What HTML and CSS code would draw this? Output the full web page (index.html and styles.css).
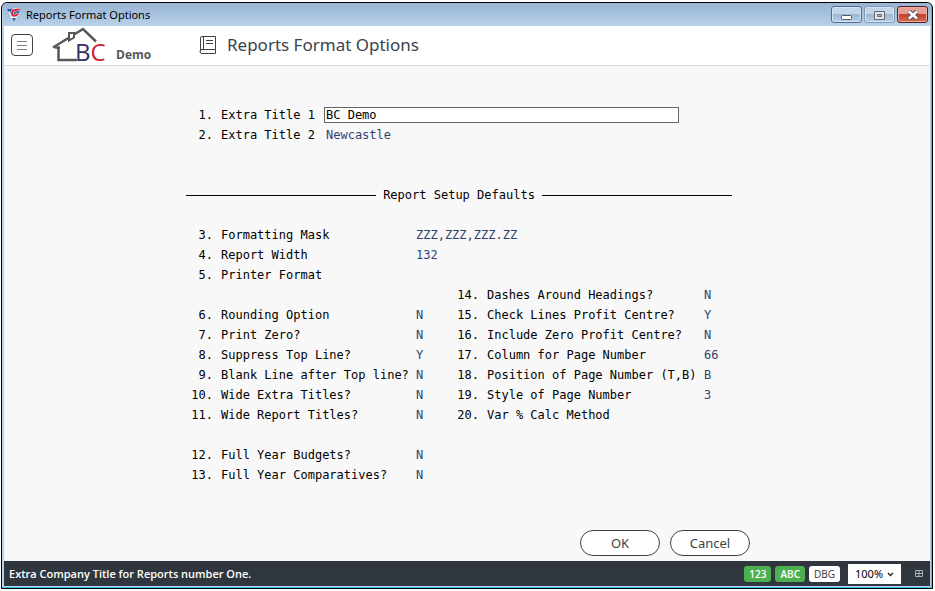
FILE: index.html
```html
<!DOCTYPE html>
<html lang="en">
<head>
    <meta charset="UTF-8">
    <meta name="viewport" content="width=device-width, initial-scale=1.0">
    <title>Reports Format Options</title>
    <link rel="stylesheet" href="styles.css">
</head>
<body>
    <div class="window">
        <!-- Title bar -->
        <div class="title-bar">
            <svg class="app-icon" width="14" height="14" viewBox="0 0 14 14">
                <path d="M0 1h13.500L7 13.500z" fill="#2f5cae"></path>
                <path d="M2 3.500l3 6M4 9.500h6" stroke="#fff" stroke-width="1.200"></path>
                <path d="M12.500 1.500C9.500 1 5 2.500 5 5.500s3.500 2.500 6 .5" fill="none" stroke="#fff" stroke-width="3"></path>
                <path d="M12.500 1.500C9.500 1 5 2.500 5 5.500s3.500 2.500 6 .5" fill="none" stroke="#d8202c" stroke-width="2"></path>
            </svg>
            <span class="title-text">Reports Format Options</span>
            <div class="window-buttons">
                <button class="window-button" aria-label="Minimize">
                    <svg width="12" height="12" viewBox="0 0 12 12"><rect x=".5" y="6.500" width="10" height="4" rx="1" fill="#fff" stroke="#535666"></rect></svg>
                </button>
                <button class="window-button maximize" aria-label="Maximize">
                    <svg width="12" height="12" viewBox="0 0 12 12"><path d="M.5 2.500h10v8h-10zM3.500 5.500v2h4v-2z" fill="#e4e4e4" fill-rule="evenodd" stroke="#626a78"></path></svg>
                </button>
                <button class="window-button close" aria-label="Close">
                    <svg width="14" height="12" viewBox="0 0 14 12"><path d="M3 2.500l8 7M11 2.500l-8 7" stroke="#535666" stroke-width="4.500"></path><path d="M3 2.500l8 7M11 2.500l-8 7" stroke="#fff" stroke-width="2.500"></path></svg>
                </button>
            </div>
        </div>

        <!-- Header -->
        <header class="header">
            <button class="menu-button" aria-label="Menu">
                <svg width="12" height="10" viewBox="0 0 12 10"><path d="M1 1.500h10M1 5.500h10M1 9.500h10" stroke="#7b8287"></path></svg>
            </button>
            <div class="brand">
                <svg class="logo" width="54" height="36" viewBox="0 0 54 36">
                    <path d="M1 20.500L31 2l13 12.500" fill="none" stroke="#58585a" stroke-width="2.500"></path>
                    <path d="M3 20.500h5M6.500 21v12H25" fill="none" stroke="#58585a" stroke-width="2.500"></path>
                    <path d="M17 11V6h5v4.500l-5 3z" fill="#fff" stroke="#58585a" stroke-width="2"></path>
                    <text class="logo-text" x="23" y="34" fill="#2f2f66">B<tspan fill="#cc2238">C</tspan></text>
                </svg>
                <span class="brand-name">Demo</span>
            </div>
            <svg class="book-icon" width="18" height="20" viewBox="0 0 18 20" fill="none" stroke="#39434c">
                <path d="M3 1.500h13.500v13H3a2 2 0 0 0 0 4h13.500v-4M1.500 16.500V3A1.500 1.500 0 0 1 3 1.500M4.500 1.500v13M7 5.500h7M7 8.500h7"></path>
            </svg>
            <h1 class="page-title">Reports Format Options</h1>
        </header>

        <!-- Form -->
        <main class="content">
            <form class="form">
                <div class="row">
                    <span class="number">1.</span>
                    <label class="title-label" for="extra-title-1">Extra Title 1</label>
                    <input class="title-input" type="text" id="extra-title-1" value="BC Demo">
                </div>
                <div class="row">
                    <span class="number">2.</span>
                    <label class="title-label" for="extra-title-2">Extra Title 2</label>
                    <input class="title-input plain" type="text" id="extra-title-2" value="Newcastle">
                </div>

                <h2 class="divider">Report Setup Defaults</h2>

                <div class="columns">
                    <div class="column">
                        <div class="row"><span class="number">3.</span><label class="label" for="mask">Formatting Mask</label><output class="value" id="mask">ZZZ,ZZZ,ZZZ.ZZ</output></div>
                        <div class="row"><span class="number">4.</span><label class="label" for="width">Report Width</label><output class="value" id="width">132</output></div>
                        <div class="row"><span class="number">5.</span><label class="label" for="printer">Printer Format</label><output class="value" id="printer"></output></div>
                        <div class="row group"><span class="number">6.</span><label class="label" for="rounding">Rounding Option</label><output class="value" id="rounding">N</output></div>
                        <div class="row"><span class="number">7.</span><label class="label" for="zero">Print Zero?</label><output class="value" id="zero">N</output></div>
                        <div class="row"><span class="number">8.</span><label class="label" for="suppress">Suppress Top Line?</label><output class="value" id="suppress">Y</output></div>
                        <div class="row"><span class="number">9.</span><label class="label" for="blank">Blank Line after Top line?</label><output class="value" id="blank">N</output></div>
                        <div class="row"><span class="number">10.</span><label class="label" for="wide-extra">Wide Extra Titles?</label><output class="value" id="wide-extra">N</output></div>
                        <div class="row"><span class="number">11.</span><label class="label" for="wide-report">Wide Report Titles?</label><output class="value" id="wide-report">N</output></div>
                        <div class="row group"><span class="number">12.</span><label class="label" for="budgets">Full Year Budgets?</label><output class="value" id="budgets">N</output></div>
                        <div class="row"><span class="number">13.</span><label class="label" for="comparatives">Full Year Comparatives?</label><output class="value" id="comparatives">N</output></div>
                    </div>
                    <div class="column second">
                        <div class="row"><span class="number">14.</span><label class="label" for="dashes">Dashes Around Headings?</label><output class="value" id="dashes">N</output></div>
                        <div class="row"><span class="number">15.</span><label class="label" for="check-lines">Check Lines Profit Centre?</label><output class="value" id="check-lines">Y</output></div>
                        <div class="row"><span class="number">16.</span><label class="label" for="include-zero">Include Zero Profit Centre?</label><output class="value" id="include-zero">N</output></div>
                        <div class="row"><span class="number">17.</span><label class="label" for="page-column">Column for Page Number</label><output class="value" id="page-column">66</output></div>
                        <div class="row"><span class="number">18.</span><label class="label" for="page-position">Position of Page Number (T,B)</label><output class="value" id="page-position">B</output></div>
                        <div class="row"><span class="number">19.</span><label class="label" for="page-style">Style of Page Number</label><output class="value" id="page-style">3</output></div>
                        <div class="row"><span class="number">20.</span><label class="label" for="var-method">Var % Calc Method</label><output class="value" id="var-method"></output></div>
                    </div>
                </div>

                <div class="actions">
                    <button class="action-button" type="submit">OK</button>
                    <button class="action-button" type="button">Cancel</button>
                </div>
            </form>
        </main>

        <!-- Status bar -->
        <footer class="status-bar">
            <span class="status-text">Extra Company Title for Reports number One.</span>
            <span class="badge on">123</span>
            <span class="badge on">ABC</span>
            <span class="badge">DBG</span>
            <div class="zoom">
                <select class="zoom-select" aria-label="Zoom">
                    <option>100%</option>
                </select>
                <svg class="zoom-arrow" width="7" height="5" viewBox="0 0 7 5"><path d="M1 1l2.500 2.500L6 1" fill="none" stroke="#222" stroke-width="1.300"></path></svg>
            </div>
            <svg class="grid-icon" width="8" height="7" viewBox="0 0 8 7"><path d="M.5.5h7v6h-7zM4 .5v6M.5 3.500h7" fill="none" stroke="#aab0b4"></path></svg>
        </footer>
    </div>
</body>
</html>
```
FILE: styles.css
```css
/* Reset and base styles */
* {
    margin: 0;
    padding: 0;
    box-sizing: border-box;
}

body {
    background-color: #ffffff;
    font-family: "Open Sans", "Segoe UI", sans-serif;
    min-height: 100vh;
    display: flex;
    padding: 2px 2px 2px 1px;
}

.window {
    flex: 1;
    display: flex;
    flex-direction: column;
    border: 1px solid #000000;
    border-radius: 6px 6px 0 0;
    background-color: #b9d1ea;
    padding: 0 2px 2px;
    box-shadow: inset -1px -1px 0 #35c5e8;
}

/* Title bar */
.title-bar {
    display: flex;
    align-items: center;
    height: 23px;
    margin: 0 -1px;
    padding: 0 3px 0 4px;
    border-radius: 5px 5px 0 0;
    background: linear-gradient(#98b4d2, #b9d1ea);
}

.title-text {
    flex: 1;
    margin-left: 5px;
    font-family: "Noto Sans", "Segoe UI", sans-serif;
    font-size: 11px;
    color: #000000;
}

.window-buttons {
    display: flex;
    gap: 2px;
}

.window-button {
    display: flex;
    align-items: center;
    justify-content: center;
    width: 31px;
    height: 17px;
    border: 1px solid #566b88;
    border-radius: 3px;
    background: linear-gradient(#c2d5e9 50%, #9db8d5 50%, #b7cfe8);
    box-shadow: inset 0 0 0 1px #d5e4f3;
}

.window-button.maximize {
    border-color: #8099b6;
}

.window-button.close {
    border-color: #541c25;
    background: linear-gradient(#e5a092 45%, #c3402c 50%, #d5694f);
    box-shadow: inset 0 0 0 1px #e8aca0;
}

/* Header */
.header {
    display: flex;
    align-items: center;
    height: 40px;
    padding: 0 7px 1px;
    background-color: #ffffff;
    border-bottom: 1px solid #dddddd;
}

.menu-button {
    display: flex;
    align-items: center;
    justify-content: center;
    width: 22px;
    height: 22px;
    border: 1px solid #39434c;
    border-radius: 4px;
    background-color: #ffffff;
}

.brand {
    display: flex;
    align-items: flex-end;
    width: 147px;
    margin-left: 19px;
}

.logo {
    overflow: visible;
}

.logo-text {
    font-family: "Open Sans", sans-serif;
    font-size: 24px;
}

.brand-name {
    margin-left: 10px;
    font-size: 12px;
    font-weight: 700;
    line-height: 16px;
    color: #58585a;
}

.page-title {
    margin-left: 10px;
    font-family: "Noto Sans", "Segoe UI", sans-serif;
    font-size: 17px;
    font-weight: 400;
    line-height: 22px;
    color: #39434c;
}

/* Form */
.content {
    flex: 1;
    background-color: #f8f8f8;
    padding: 39px 16px 5px 18px;
}

.form {
    width: 564px;
    margin: 0 auto;
    font-family: "DejaVu Sans Mono", "Lucida Console", monospace;
    font-size: 12px;
    color: #000000;
}

.row {
    display: flex;
    align-items: center;
    height: 20px;
    white-space: pre;
}

.number {
    flex-shrink: 0;
    width: 27px;
    margin-right: 8px;
    text-align: right;
}

.title-label {
    width: 103px;
}

.title-input {
    width: 355px;
    height: 16px;
    padding: 0 1px;
    border: 1px solid #666666;
    background-color: #ffffff;
    font: inherit;
    color: #000000;
}

.title-input.plain {
    border-color: transparent;
    background-color: transparent;
    color: #30406e;
}

.divider {
    display: flex;
    align-items: center;
    gap: 7px;
    width: 546px;
    height: 20px;
    margin: 40px 0 20px;
    font-size: 12px;
    font-weight: 400;
}

.divider::before,
.divider::after {
    content: "";
    flex: 1;
    height: 1px;
    background-color: #000000;
}

.columns {
    display: flex;
}

.column {
    width: 266px;
}

.column.second {
    width: 280px;
    padding-top: 60px;
}

.group {
    margin-top: 20px;
}

.label {
    width: 195px;
    flex-shrink: 0;
}

.second .label {
    width: 217px;
}

.value {
    color: #30406e;
}

.actions {
    display: flex;
    justify-content: flex-end;
    gap: 10px;
    margin-top: 45px;
}

.action-button {
    width: 80px;
    height: 26px;
    border: 1px solid #39434c;
    border-radius: 13px;
    background-color: #ffffff;
    font-family: "Noto Sans", "Segoe UI", sans-serif;
    font-size: 13px;
    color: #39434c;
}

/* Status bar */
.status-bar {
    display: flex;
    align-items: center;
    gap: 4px;
    height: 25px;
    padding: 0 7px 0 5px;
    background-color: #2f363d;
}

.status-text {
    flex: 1;
    font-family: "Open Sans", "Segoe UI", sans-serif;
    font-size: 11px;
    font-weight: 600;
    color: #ffffff;
}

.badge {
    padding: 0 5px;
    border-radius: 3px;
    background-color: #ffffff;
    font-size: 10px;
    line-height: 16px;
    color: #2f363d;
}

.badge.on {
    background-color: #4caf50;
    font-weight: 600;
    color: #ffffff;
}

.zoom {
    position: relative;
    margin: 0 10px 0 4px;
}

.zoom-select {
    display: block;
    width: 53px;
    height: 20px;
    padding-left: 7px;
    border: none;
    appearance: none;
    background-color: #ffffff;
    font-family: "Noto Sans", "Segoe UI", sans-serif;
    font-size: 11px;
    color: #000000;
}

.zoom-arrow {
    position: absolute;
    top: 8px;
    right: 7px;
    pointer-events: none;
}
```
